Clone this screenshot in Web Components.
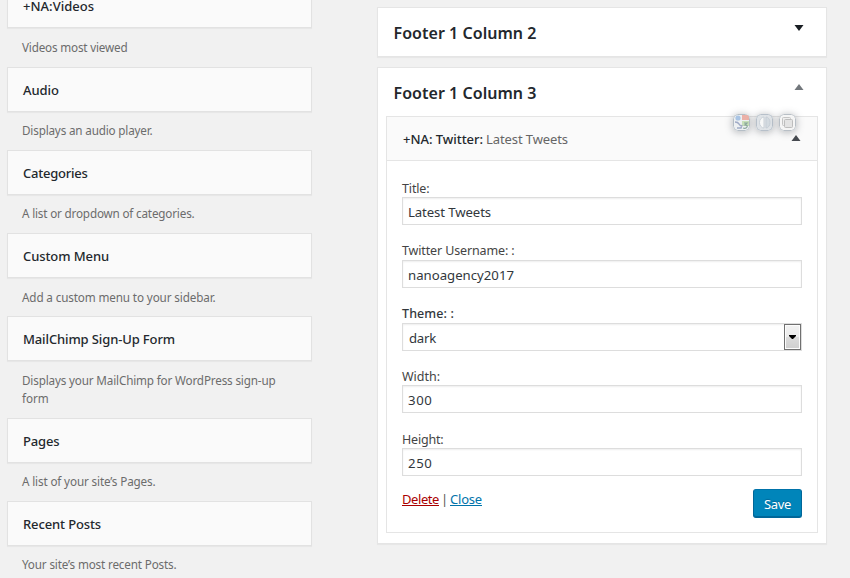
<!DOCTYPE html>
<html lang="en">
<head>
<meta charset="utf-8">
<title>Widgets</title>
<style>
html,body{margin:0;height:578px;overflow:hidden;background:#f1f1f1}
body{font-family:"Noto Sans","Open Sans",sans-serif;font-size:13px;color:#444}
</style>
</head>
<body>
<widgets-screen></widgets-screen>
<script>
const define = (name, html, setup) => customElements.define(name, class extends HTMLElement {
  connectedCallback() {
    if (this.shadowRoot) return;
    this.attachShadow({mode: 'open'}).innerHTML = html(this);
    if (setup) setup(this);
  }
});

// A run of text whose tracking is adjusted to a given advance width.
define('fit-text', () => `<style>:host{display:inline-block;white-space:pre}
:host([link]) span{text-decoration:underline;text-decoration-thickness:1px;text-underline-offset:1px;text-decoration-skip-ink:none}</style><span><slot></slot></span>`, el => {
  const target = +el.getAttribute('w');
  const span = el.shadowRoot.querySelector('span');
  const n = el.textContent.length;
  const natural = span.getBoundingClientRect().width;
  if (target && n > 1) span.style.letterSpacing = ((target - natural) / n).toFixed(3) + 'px';
});

define('available-widget', () => `<style>
:host{display:block}
.bar{box-sizing:border-box;height:45px;padding:0 15px;border:1px solid #e2e2e2;background:#fafafa;box-shadow:0 1px 1px rgba(0,0,0,.04);
 display:flex;align-items:center;font-size:13px;font-weight:500;line-height:18px;color:#23282d}
.desc{padding:9px 15px;font-size:11.700px;line-height:18px;color:#6c6c6c}
:host([low]) .desc{padding-top:10px}
</style><div class="bar"><slot name="title"></slot></div><div class="desc"><slot></slot></div>`);

define('toggle-arrow', el => `<style>:host{display:block;width:10px;height:6px}svg{display:block}</style>
<svg width="10" height="6" viewBox="0 0 10 6"><path fill="currentColor" d="${el.hasAttribute('up') ? 'M.5 6L5 0 9.500 6z' : 'M.5 0h9L5 6z'}"/></svg>`);

define('side-panel', () => `<style>
:host{display:block;box-sizing:border-box;width:450px;border:1px solid #e5e5e5;background:#fff;box-shadow:0 1px 1px rgba(0,0,0,.04)}
.head{display:flex;justify-content:space-between;height:48px;padding:0 22px 0 15.500px}
.title{font-size:16px;font-weight:600;line-height:24px;padding-top:13px;color:#23282d}
.arrow{padding-top:17px}
:host([open]) .arrow{padding-top:16px}
</style><div class="head"><div class="title"><slot name="title"></slot></div><div class="arrow"><slot name="arrow"></slot></div></div><slot></slot>`);

define('form-field', el => `<style>
:host{display:block;height:63px}
:host([short]){height:62px}
.label{height:18px;line-height:18px;font-size:12.500px;color:#444}
:host([first]) .label,:host([low]) .label{line-height:20px}
:host([strong]) .label{font-weight:500;color:#32373c}
.box{box-sizing:border-box;height:28px;border:1px solid #ddd;background:#fff;box-shadow:inset 0 1px 2px rgba(0,0,0,.07);
 display:flex;justify-content:space-between;align-items:center;padding-left:5px;font-size:13.200px;line-height:20px;color:#32373c}
.text{padding-top:2px}
:host([select]) .box{padding-left:6px}
.drop{box-sizing:border-box;width:17px;height:26px;border:1px solid #707070;box-shadow:inset 0 0 0 1px #fcfcfc;
 background:linear-gradient(#f2f2f2 0,#ebebeb 50%,#dcdcdc 50%,#cfcfcf 100%);display:flex;align-items:center;justify-content:center}
svg{display:block}
</style><div class="label"><slot name="label"></slot></div><div class="box"><span class="text"><slot></slot></span>${el.hasAttribute('select')
  ? '<span class="drop"><svg width="7" height="4"><path d="M0 0h7v1L4 4H3L0 1z" fill="#000"/></svg></span>' : ''}</div>`);

define('save-button', () => `<style>
:host{box-sizing:border-box;display:flex;justify-content:center;width:49px;height:29px;padding-top:4px;border:1px solid;border-color:#0073aa #006799 #006799;
 border-radius:3px;background:#0085ba;box-shadow:inset 0 -1px 0 #006799;color:#fff;font-size:13px;line-height:20px;text-shadow:0 -1px 1px #006799}
</style><slot></slot>`);

// Faded hover shortcuts: search, contrast and copy.
define('hover-tools', () => `<style>
:host{display:flex;gap:6px}
svg{display:block;width:17px;height:17px;border-radius:5px;box-shadow:0 1px 7px 1px rgba(80,85,95,.34)}
</style>
<svg viewBox="0 0 17 17"><rect x=".5" y=".5" width="16" height="16" rx="4" fill="#edf0f2" stroke="#b5bec6"/>
<circle cx="5" cy="4" r="2.600" fill="#a9c4e4"/><path d="M9 1h5q2 0 2 2v3H9z" fill="#ebb1a8"/><path d="M9 7h7v5H9z" fill="#c6dfb8"/>
<path d="M2 8q3 0 4 2t3 2M4 14h4l1-3" fill="none" stroke="#9faac6" stroke-width="1.600"/><path d="M11 9h3l-2 2q3 0 2 2t-4 1" fill="none" stroke="#8aa69c" stroke-width="1.200"/></svg>
<svg viewBox="0 0 17 17"><rect x=".5" y=".5" width="16" height="16" rx="4" fill="#dfe3e7" stroke="#b7c0ca"/>
<path d="M8 3a4.500 5.500 0 0 0 0 11z" fill="#f7f8f8" stroke="#c9d0d7"/><path d="M10 3a4 5.500 0 0 1 0 11z" fill="#d3dae0" stroke="#c5cdd5"/></svg>
<svg viewBox="0 0 17 17"><rect x=".5" y=".5" width="16" height="16" rx="4" fill="#f5f5f5" stroke="#b8bfc6"/>
<rect x="3.500" y="3.500" width="8" height="8" rx="1" fill="#eee" stroke="#c4c4c4"/><rect x="5.500" y="5.500" width="8" height="8" rx="1" fill="#e3e3e3" stroke="#bdbdbd"/></svg>`);

define('widget-editor', () => `<style>
:host{display:block;position:relative;box-sizing:border-box;width:432px;height:417px;margin:0 0 10px 8px;border:1px solid #e5e5e5;background:#fff}
.head{box-sizing:border-box;height:44px;padding:0 16px 0 16px;border-bottom:1px solid #e5e5e5;background:#fafafa;display:flex;justify-content:space-between;
 font-size:13px;line-height:18px;color:#23282d}
.name{padding-top:13px;font-weight:500;display:flex}
.sub{color:#666;font-weight:400;margin-left:3px}
.head toggle-arrow{margin-top:18px;color:#464a50}
hover-tools{position:absolute;left:346px;top:-3px}
.form{padding:18px 15px 0}
.foot{display:flex;justify-content:space-between;margin-top:-4px;width:400px}
.links{display:flex;line-height:20px}
.bar{width:11px;text-align:center;color:#555}
a{color:#0073aa}
a.del{color:#a00}
</style>
<div class="head"><div class="name"><fit-text w="80">+NA: Twitter:</fit-text><span class="sub"><fit-text w="82">Latest Tweets</fit-text></span></div><toggle-arrow up></toggle-arrow></div>
<div class="form">
<form-field first><fit-text slot="label" w="27.500">Title:</fit-text><fit-text w="83">Latest Tweets</fit-text></form-field>
<form-field><fit-text slot="label" w="112.500">Twitter Username: :</fit-text><fit-text w="106">nanoagency2017</fit-text></form-field>
<form-field select strong short><fit-text slot="label" w="52">Theme: :</fit-text><fit-text w="27">dark</fit-text></form-field>
<form-field low><fit-text slot="label" w="38">Width:</fit-text><fit-text w="24.500">300</fit-text></form-field>
<form-field low><fit-text slot="label" w="41.500">Height:</fit-text><fit-text w="24.500">250</fit-text></form-field>
<div class="foot"><div class="links"><a class="del"><fit-text link w="37">Delete</fit-text></a><span class="bar">|</span><a><fit-text link w="32">Close</fit-text></a></div>
<save-button><fit-text w="27">Save</fit-text></save-button></div>
</div><hover-tools></hover-tools>`);

define('widgets-screen', () => `<style>
:host{display:flex;gap:65px;padding-left:7px;width:843px;height:578px;overflow:hidden}
.left{width:305px;margin-top:-17px}
.left available-widget{height:83px}
.left available-widget.first{height:84px}
.left available-widget.tall{height:102px}
.right{padding-top:7px;display:flex;flex-direction:column;gap:10px}
.dark{color:#191e23}.grey{color:#72777c}
</style>
<div class="left">
<available-widget low class="first"><fit-text slot="title" w="71">+NA:Videos</fit-text><fit-text w="105.500">Videos most viewed</fit-text></available-widget>
<available-widget><fit-text slot="title" w="36">Audio</fit-text><fit-text w="130.500">Displays an audio player.</fit-text></available-widget>
<available-widget><fit-text slot="title" w="64.500">Categories</fit-text><fit-text w="172.500">A list or dropdown of categories.</fit-text></available-widget>
<available-widget low><fit-text slot="title" w="86">Custom Menu</fit-text><fit-text w="193.500">Add a custom menu to your sidebar.</fit-text></available-widget>
<available-widget low class="tall"><fit-text slot="title" w="152">MailChimp Sign-Up Form</fit-text><fit-text w="253.500">Displays your MailChimp for WordPress sign-up</fit-text><br><fit-text w="26.500">form</fit-text></available-widget>
<available-widget><fit-text slot="title" w="36.500">Pages</fit-text><fit-text w="133.500">A list of your site’s Pages.</fit-text></available-widget>
<available-widget><fit-text slot="title" w="78">Recent Posts</fit-text><fit-text w="154.500">Your site’s most recent Posts.</fit-text></available-widget>
</div>
<div class="right">
<side-panel><fit-text slot="title" w="143">Footer 1 Column 2</fit-text><toggle-arrow slot="arrow" class="dark"></toggle-arrow></side-panel>
<side-panel open><fit-text slot="title" w="143">Footer 1 Column 3</fit-text><toggle-arrow slot="arrow" class="grey" up></toggle-arrow><widget-editor></widget-editor></side-panel>
</div>`);
</script>
</body>
</html>
